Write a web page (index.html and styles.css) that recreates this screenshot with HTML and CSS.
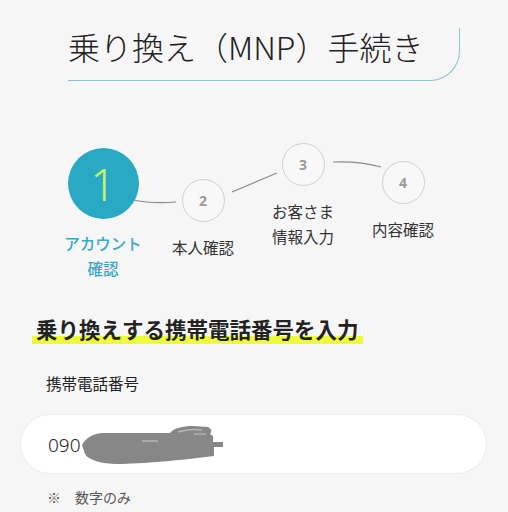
FILE: index.html
```html
<!DOCTYPE html>
<html lang="ja">
<head>
  <meta charset="UTF-8" />
  <meta name="viewport" content="width=device-width, initial-scale=1.0"/>
  <title>乗り換え（MNP）手続き</title>
  <link rel="stylesheet" href="styles.css">
</head>
<body>

<div class="title-box">
  <h1>乗り換え（MNP）手続き</h1>
</div>

<div class="steps">
  <svg class="step-lines" width="508" height="150" viewBox="0 0 508 150">
    <path d="M134 60 Q152 64 176 62" />
    <path d="M232 52 L277 33" />
    <path d="M333 22 Q360 21 381 27" />
  </svg>
  <div class="step step-1 current">
    <div class="circle">1</div>
    <div class="label">アカウント<br>確認</div>
  </div>
  <div class="step step-2">
    <div class="circle">2</div>
    <div class="label">本人確認</div>
  </div>
  <div class="step step-3">
    <div class="circle">3</div>
    <div class="label">お客さま<br>情報入力</div>
  </div>
  <div class="step step-4">
    <div class="circle">4</div>
    <div class="label">内容確認</div>
  </div>
</div>

<h2 class="section-title"><span>乗り換えする携帯電話番号を入力</span></h2>

<p class="field-label">携帯電話番号</p>
<div class="phone-input">
  <span class="value">090</span>
  <!-- 番号は塗りつぶし -->
  <svg class="scribble" width="142" height="42" viewBox="0 0 142 42">
    <path class="blot" d="M0 21 C4 14 10 10 20 9 L88 9 C92 4 100 2 112 2 L126 3 C130 5 130 8 128 10 L131 12 L131 18 L141 18 L141 23 L132 23 L132 32 C100 36 60 40 35 40 C20 40 6 36 3 30 Z" />
    <path class="gap" d="M96 8 C104 5 112 5 120 6 M112 10 L124 10 M60 17 L76 17" />
  </svg>
</div>
<p class="note">※　数字のみ</p>

</body>
</html>
```

FILE: styles.css
```css
body {
  font-family: "Noto Sans CJK JP", "Noto Sans", sans-serif;
  margin: 0; padding: 0;
  background: #f6f6f6;
  color: #222;
}
.title-box {
  margin: 28px 0 0 68px;
  width: 391px;
  height: 52px;
  border-right: 1.5px solid #8cc3cf;
  border-bottom: 1.5px solid #8cc3cf;
  border-bottom-right-radius: 30px;
}
.title-box h1 {
  margin: 0;
  font-size: 32px;
  font-weight: 300;
  line-height: 36px;
  color: #222;
}
.steps {
  position: relative;
  display: flex;
  padding-left: 53px;
  margin-top: 59px;
  height: 150px;
}
.step-lines {
  position: absolute;
  left: 0; top: 0;
  fill: none;
  stroke: #8a8a8a;
  stroke-width: 1.2;
}
.step {
  width: 100px;
  display: flex;
  flex-direction: column;
  align-items: center;
  position: relative;
}
.circle {
  width: 43px;
  height: 43px;
  box-sizing: border-box;
  border: 1px solid #cfcfcf;
  border-radius: 50%;
  background: #f8f8f8;
  color: #9a9a9a;
  font-family: "Noto Sans", sans-serif;
  font-size: 14px;
  font-weight: bold;
  display: flex;
  align-items: center;
  justify-content: center;
}
.label {
  margin-top: 13px;
  font-size: 15.5px;
  line-height: 25px;
  text-align: center;
  color: #333;
}
.step-1 { margin-top: 8px; }
.step-2 { margin-top: 39px; }
.step-3 { margin-top: 3px; }
.step-4 { margin-top: 21px; }
.current .circle {
  width: 71px;
  height: 71px;
  border: none;
  background: #2aa9c5;
  color: #c8f36c;
  font-size: 44px;
  font-weight: 300;
}
.current .label {
  margin-top: 12px;
  color: #3ba8c3;
  font-weight: 500;
}
.section-title {
  margin: 24px 0 0 32px;
  font-size: 21.5px;
  font-weight: bold;
  line-height: 30px;
}
.section-title span {
  display: inline-block;
  padding: 0 4px;
  background: linear-gradient(transparent 73%, #eefa3c 73%);
}
.field-label {
  margin: 27px 0 0 46px;
  font-size: 15.5px;
  line-height: 24px;
  color: #222;
}
.phone-input {
  margin: 19px 21px 0 20px;
  height: 60px;
  box-sizing: border-box;
  background: #fff;
  border: 1px solid #ececec;
  border-radius: 30px;
  display: flex;
  align-items: center;
  padding-left: 27px;
}
.phone-input .value {
  font-family: "Noto Sans", sans-serif;
  font-size: 19px;
  font-weight: 300;
  color: #222;
  margin-top: 2px;
}
.scribble {
  margin-left: 1px;
  margin-top: 2px;
}
.scribble .blot {
  fill: #878787;
}
.scribble .gap {
  fill: none;
  stroke: #b5b5b5;
  stroke-width: 1.5;
}
.note {
  margin: 13px 0 0 47px;
  font-size: 14px;
  line-height: 20px;
  color: #555;
}
```
